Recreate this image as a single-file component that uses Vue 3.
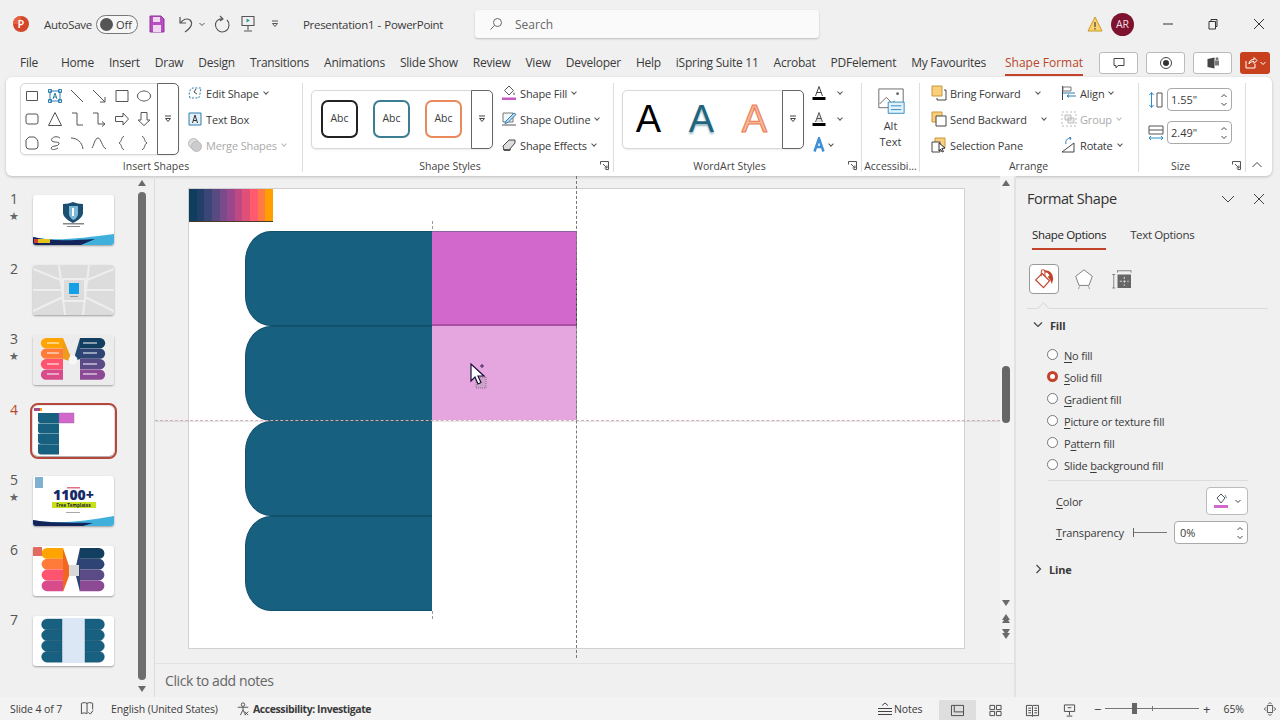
<script setup>
const tabs = [
  ['File', 24], ['Home', 0], ['Insert', 0], ['Draw', 0], ['Design', 0], ['Transitions', 0], ['Animations', 0],
  ['Slide Show', 0], ['Review', 0], ['View', 0], ['Developer', 0], ['Help', 0], ['iSpring Suite 11', 0],
  ['Acrobat', 0], ['PDFelement', 0], ['My Favourites', 0]
]
const shapes = [
  'M2.5 3.5h11v9h-11z',
  'M3 3h10v10H3zM6 11l2-6 2 6M6.8 9h2.4M1.5 1.5h3v3h-3zM11.5 1.5h3v3h-3zM1.5 11.5h3v3h-3zM11.5 11.5h3v3h-3z',
  'M2 2l12 12',
  'M2 2l12 12M14 9v5H9',
  'M2 2.5h12v11H2z',
  'M8 3c3.6 0 6.5 2.2 6.5 5s-2.9 5-6.5 5-6.5-2.2-6.5-5S4.400 3 8 3z',
  'M4 3h8a2 2 0 0 1 2 2v6a2 2 0 0 1-2 2H4a2 2 0 0 1-2-2V5a2 2 0 0 1 2-2z',
  'M8 1.500l6.500 13h-13z',
  'M3 2h5v12h6',
  'M2 2h5v11h6M11 10.500l3 2.500-3 2.500',
  'M1.500 5.500H9V2l5.500 6L9 14v-3.500H1.500z',
  'M5 1.500h6V9h3l-6 5.500L2 9h3z',
  'M2 5l3-3h5c3 1 4 4 4 6v3a3 3 0 0 1-3 3H5a3 3 0 0 1-3-3z',
  'M13 3C9 0 3 3 5 6c2 2 8 0 7 3s-7 1-8 4c0 2 4 2 7 0',
  'M2 3c6 0 11 4 12 11',
  'M1 13C3 10 4 3 7 3c3 0 4 9 8 11',
  'M10 1.500C7 1.500 8 7 5 8c3 1 2 6.500 5 6.500',
  'M6 1.500C9 1.500 8 7 11 8c-3 1-2 6.500-5 6.500'
]
const slides = [
  { n: 1, star: true }, { n: 2 }, { n: 3, star: true }, { n: 4, sel: true },
  { n: 5, star: true }, { n: 6 }, { n: 7 }
]
const stripes = ['#0f3d5e', '#223f6a', '#3a4676', '#5a4a82', '#7b4a8a', '#9b478d', '#bf4a83', '#e04f78', '#ff5a6e', '#ff7a45', '#ffa000']
const fills = [
  { label: 'o fill', key: 'N', pre: '' },
  { label: 'olid fill', key: 'S', pre: '', on: true },
  { label: 'radient fill', key: 'G', pre: '' },
  { label: 'icture or texture fill', key: 'P', pre: '' },
  { label: 'ttern fill', key: 'a', pre: 'P' },
  { label: 'ackground fill', key: 'b', pre: 'Slide ' }
]
const warm = ['#ffa400', '#ff7b3a', '#ff5470', '#d84c8c']
const cool = ['#123f5f', '#2e4474', '#5a4a86', '#8c4a94']
</script>

<template>
  <div class="app">
    <header class="titlebar">
      <svg class="logo" viewBox="0 0 18 18"><circle cx="9" cy="9" r="8" fill="#d2472a"/><path d="M1 9a8 8 0 0 1 8-8v8z" fill="#e8613c"/><text x="5.500" y="13" font-size="11" fill="#fff" font-family="Open Sans" font-weight="600">P</text></svg>
      <span class="autosave">AutoSave</span>
      <span class="toggle"><i></i><b>Off</b></span>
      <svg class="qa save" viewBox="0 0 16 18"><path d="M1 1h11l3 3v13H1z" fill="#b84fc0" stroke="#8f3296"/><path d="M4 2h7v5H4z" fill="#f0d8f2"/><path d="M4 10h8v7H4z" fill="#f0d8f2"/></svg>
      <svg class="qa undo" viewBox="0 0 16 18"><path d="M2 2v6h6M2.500 8C5 4 9 3 12 5c3 3 2 7-5 12" fill="none" stroke="#555" stroke-width="1.200"/></svg>
      <svg class="mini chev-undo" viewBox="0 0 8 8"><path d="M1.500 3L4 5.500 6.500 3" fill="none" stroke="#555"/></svg>
      <svg class="qa redo" viewBox="0 0 16 18"><path d="M6 1l3 3-3 2M9 4C4 3 1 7 1.500 10.500 2 14 5 17 8 17c4 0 7-3 7-7 0-2-1-4-2-5" fill="none" stroke="#555" stroke-width="1.100"/></svg>
      <svg class="qa present" viewBox="0 0 16 18"><path d="M2 1.500h12v9H2zM8 10.500V15M4 16h8" fill="none" stroke="#555" stroke-width="1.100"/><path d="M6.500 3.500l3.500 2-3.500 2z" fill="#2f9e8f"/></svg>
      <svg class="mini custom" viewBox="0 0 8 8"><path d="M1 1h6M1.500 3.500L4 6.500l2.500-3z" fill="none" stroke="#555"/></svg>
      <span class="doc">Presentation1&nbsp; - &nbsp;PowerPoint</span>
      <div class="search">
        <svg viewBox="0 0 14 14" class="ico14"><circle cx="8.500" cy="5.500" r="4" fill="none" stroke="#666"/><path d="M5.500 8.500L1.500 12.500" stroke="#666"/></svg>
        <span>Search</span>
      </div>
      <div class="title-right">
        <svg class="warn" viewBox="0 0 16 16"><path d="M8 1l7 14H1z" fill="#fbd36a" stroke="#c79a2a"/><path d="M8 6v5M8 12v1.500" stroke="#444" stroke-width="1.200"/></svg>
        <span class="avatar">AR</span>
        <svg class="win min" viewBox="0 0 12 12"><path d="M1 6h10" stroke="#333"/></svg>
        <svg class="win rest" viewBox="0 0 12 12"><path d="M2 3.500h6.500V11H2zM4 3.500V1.500h6v7H8.500" fill="none" stroke="#333"/></svg>
        <svg class="win close" viewBox="0 0 12 12"><path d="M1 1l10 10M11 1L1 11" stroke="#333"/></svg>
      </div>
    </header>

    <nav class="tabs">
      <span v-for="t in tabs" :key="t[0]" class="tab" :class="{ file: t[1] }">{{ t[0] }}</span>
      <span class="tab active">Shape Format</span>
      <div class="tab-actions">
        <span class="tbtn"><svg viewBox="0 0 14 14" class="ico14"><path d="M2 2.500h10v7H6L4 12V9.500H2z" fill="none" stroke="#444"/></svg></span>
        <span class="tbtn"><svg viewBox="0 0 14 14" class="ico14"><circle cx="7" cy="7" r="5.500" fill="none" stroke="#444"/><circle cx="7" cy="7" r="3" fill="#333"/></svg></span>
        <span class="tbtn"><svg viewBox="0 0 14 14" class="ico14"><path d="M1.500 3l7-1.500v11l-7-1.500z" fill="#444"/><path d="M9 4.500h4v5H9z" fill="#777"/><circle cx="11" cy="2.800" r="1.500" fill="#777"/></svg></span>
        <span class="share"><svg viewBox="0 0 14 14" class="ico14"><path d="M2 5v7h9V8M5 8c0-3 2-4.500 5-4.500V1.500l3 3-3 3V5.500C8 5.500 6 6 5 8z" fill="none" stroke="#fff"/></svg><svg class="mini" viewBox="0 0 8 8"><path d="M1.500 3L4 5.500 6.500 3" fill="none" stroke="#fff"/></svg></span>
      </div>
    </nav>

    <section class="ribbon">
      <div class="group g-insert">
        <div class="gcontent">
          <div class="gallery gal-shapes">
            <div class="shape-grid">
              <svg v-for="(d, i) in shapes" :key="i" class="ico" :class="{ accent: i === 1 }" viewBox="0 0 16 16"><path :d="d"/></svg>
            </div>
            <span class="gscroll"><svg class="mini" viewBox="0 0 8 8"><path d="M1 1h6M1.500 3.500L4 6.500l2.500-3z" fill="none" stroke="#444"/></svg></span>
          </div>
          <div class="cmds">
            <div class="cmd"><svg class="ico plain" viewBox="0 0 16 16"><path d="M3 13C1 9 3 3 6 3h8l-1 6c-1 2-1 4-1 4z" fill="none" stroke="#2b7cb0" stroke-dasharray="2 1.500"/><path d="M9 4l-2 3 3 2" fill="none" stroke="#444"/></svg>Edit Shape<i class="caret"></i></div>
            <div class="cmd"><svg class="ico plain" viewBox="0 0 16 16"><path d="M2 2h12v12H2z" fill="#e3f0f8" stroke="#2b7cb0"/><path d="M5.500 12L8 4l2.500 8M6.300 9.500h3.400" fill="none" stroke="#333"/></svg>Text Box</div>
            <div class="cmd off"><svg class="ico plain" viewBox="0 0 16 16"><circle cx="6.500" cy="6.500" r="5" fill="#ddd" stroke="#bbb"/><circle cx="9.500" cy="9.500" r="5" fill="#ccc" stroke="#bbb"/></svg>Merge Shapes<i class="caret"></i></div>
          </div>
        </div>
        <div class="glabel l-insert">Insert Shapes</div>
      </div>
      <span class="sep"></span>

      <div class="group g-styles">
        <div class="gcontent">
          <div class="gallery gal-styles">
            <div class="abcs">
              <span class="abc a1">Abc</span><span class="abc a2">Abc</span><span class="abc a3">Abc</span>
            </div>
            <span class="gscroll"><svg class="mini" viewBox="0 0 8 8"><path d="M1 1h6M1.500 3.500L4 6.500l2.500-3z" fill="none" stroke="#444"/></svg></span>
          </div>
          <div class="cmds">
            <div class="cmd"><svg class="ico plain" viewBox="0 0 16 16"><path d="M8 1l4.500 4.500L8 10 3.500 5.500z" fill="#fff" stroke="#555"/><path d="M13 7l1 2.500h-2z" fill="#555"/><path d="M1 12.500h14v2.500H1z" fill="#c75bc4"/></svg>Shape Fill<i class="caret"></i></div>
            <div class="cmd"><svg class="ico plain" viewBox="0 0 16 16"><path d="M2 2h10v9H2z" fill="#f3f8fb" stroke="#777"/><path d="M5 10l8-8 2 1.500-8 8-3 1z" fill="#bcd9ee" stroke="#2b7cb0"/><path d="M1 13h14v2H1z" fill="#aaa"/></svg>Shape Outline<i class="caret"></i></div>
            <div class="cmd"><svg class="ico plain" viewBox="0 0 16 16"><path d="M2 9l6-6h6v3l-6 7H3z" fill="#ddd" stroke="#444"/><path d="M2 12l1 2h6l1-2" fill="#555"/></svg>Shape Effects<i class="caret"></i></div>
          </div>
        </div>
        <div class="glabel shift">Shape Styles<svg class="launch" viewBox="0 0 9 9"><path d="M.5 3.500v-3h8v8h-3M3 3l4 4M7 4.500V7H4.500" fill="none" stroke="#555"/></svg></div>
      </div>
      <span class="sep"></span>

      <div class="group g-word">
        <div class="gcontent">
          <div class="gallery gal-styles">
            <div class="wa-row">
              <span class="wa w1">A</span><span class="wa w2">A</span><span class="wa w3">A</span>
            </div>
            <span class="gscroll"><svg class="mini" viewBox="0 0 8 8"><path d="M1 1h6M1.500 3.500L4 6.500l2.500-3z" fill="none" stroke="#444"/></svg></span>
          </div>
          <div class="cmds wa-cmds">
            <div class="cmd"><svg class="ico plain" viewBox="0 0 16 16"><path d="M4.500 11L8 1.500 11.500 11M5.700 7.500h4.600" fill="none" stroke="#444"/><path d="M1.500 12h13v3h-13z" fill="#000"/></svg><i class="caret wide"></i></div>
            <div class="cmd"><svg class="ico plain" viewBox="0 0 16 16"><path d="M4.500 11L8 1.500 11.500 11M5.700 7.500h4.600" fill="#ddd" stroke="#555"/><path d="M1.500 12h13v3h-13z" fill="#000"/></svg><i class="caret wide"></i></div>
            <div class="cmd"><svg class="ico plain" viewBox="0 0 16 16"><path d="M3.500 14.500L8 1.500l4.500 13M5.300 10h5.400" fill="none" stroke="#3f8fd6" stroke-width="2.500"/></svg><i class="caret"></i></div>
          </div>
        </div>
        <div class="glabel shift">WordArt Styles<svg class="launch" viewBox="0 0 9 9"><path d="M.5 3.500v-3h8v8h-3M3 3l4 4M7 4.500V7H4.500" fill="none" stroke="#555"/></svg></div>
      </div>
      <span class="sep"></span>

      <div class="group g-access">
        <div class="gcontent alt">
          <svg class="alt-ico" viewBox="0 0 28 32"><path d="M1 1h26v20H1z" fill="#fff" stroke="#666"/><path d="M2 17l7-7 6 6 3-2" fill="none" stroke="#666"/><circle cx="21" cy="6" r="1.500" fill="#666"/><path d="M11 15h17v12H11z" fill="#e3f1fa" stroke="#2b8cc4"/><path d="M14 19h11M14 23h11" stroke="#2b8cc4"/></svg>
          <span>Alt<br>Text</span>
        </div>
        <div class="glabel">Accessibi...</div>
      </div>
      <span class="sep"></span>

      <div class="group g-arrange">
        <div class="gcontent arr">
          <div class="cmds col1">
            <div class="cmd"><svg class="ico plain" viewBox="0 0 16 16"><path d="M1 1h10v10H1z" fill="#f9cf7d" stroke="#c8973a"/><path d="M13 5h2v10H6v-2" fill="none" stroke="#444"/></svg>Bring Forward<i class="caret far1"></i></div>
            <div class="cmd"><svg class="ico plain" viewBox="0 0 16 16"><path d="M1 1h10v10H1z" fill="#f9cf7d" stroke="#c8973a"/><path d="M5 5h10v10H5z" fill="#fff" stroke="#444"/></svg>Send Backward<i class="caret far2"></i></div>
            <div class="cmd"><svg class="ico plain" viewBox="0 0 16 16"><path d="M4 1h10v10H4z" fill="#f9cf7d" stroke="#c8973a"/><path d="M1 5h8v10H1z" fill="#fff" stroke="#444"/><path d="M8 6l6 5-3 .5 1.500 3-1.500.5-1.500-3L8 14z" fill="#fff" stroke="#333"/></svg>Selection Pane</div>
          </div>
          <div class="cmds">
            <div class="cmd"><svg class="ico plain" viewBox="0 0 16 16"><path d="M1.500 1v14" stroke="#444"/><path d="M2 2h8v4H2z" fill="#fff" stroke="#777"/><path d="M2 8h12" stroke="#2b7cb0"/><path d="M6 11h9M6 11l2-1.500M6 11l2 1.500" stroke="#2b7cb0" fill="none"/></svg>Align<i class="caret"></i></div>
            <div class="cmd off"><svg class="ico plain" viewBox="0 0 16 16"><path d="M1 1h14v14H1z" fill="none" stroke="#bbb" stroke-dasharray="2 2"/><path d="M4 4h6v5H4zM7 7h6v5H7z" fill="#eee" stroke="#bbb"/></svg>Group<i class="caret"></i></div>
            <div class="cmd"><svg class="ico plain" viewBox="0 0 16 16"><path d="M1 15L13 6v9z" fill="none" stroke="#444"/><path d="M5 7c-1-3 1-6 5-6M8 0l2 1-1 2" fill="none" stroke="#2b7cb0"/></svg>Rotate<i class="caret"></i></div>
          </div>
        </div>
        <div class="glabel l-arrange">Arrange</div>
      </div>
      <span class="sep"></span>

      <div class="group g-size">
        <div class="gcontent sizes">
          <div class="size-row">
            <svg class="ico plain" viewBox="0 0 16 18"><path d="M9 2h5v14H9z" fill="#fff" stroke="#555"/><path d="M3.500 2v14M1.500 4l2-2.500 2 2.500M1.500 14l2 2.500 2-2.500" fill="none" stroke="#2b8cc4"/></svg>
            <span class="spin">1.55"<em><svg class="mini" viewBox="0 0 8 8"><path d="M1.500 5L4 2.500 6.500 5" fill="none" stroke="#444"/></svg><svg class="mini" viewBox="0 0 8 8"><path d="M1.500 3L4 5.500 6.500 3" fill="none" stroke="#444"/></svg></em></span>
          </div>
          <div class="size-row">
            <svg class="ico plain" viewBox="0 0 16 18"><path d="M1 2h14v8H1zM1 6h14" fill="#fff" stroke="#555"/><path d="M1 14h14M3 12l-2 2 2 2M13 12l2 2-2 2" fill="none" stroke="#2b8cc4"/></svg>
            <span class="spin">2.49"<em><svg class="mini" viewBox="0 0 8 8"><path d="M1.500 5L4 2.500 6.500 5" fill="none" stroke="#444"/></svg><svg class="mini" viewBox="0 0 8 8"><path d="M1.500 3L4 5.500 6.500 3" fill="none" stroke="#444"/></svg></em></span>
          </div>
        </div>
        <div class="glabel shift2">Size<svg class="launch" viewBox="0 0 9 9"><path d="M.5 3.500v-3h8v8h-3M3 3l4 4M7 4.500V7H4.500" fill="none" stroke="#555"/></svg></div>
      </div>
      <span class="sep"></span>
      <div class="collapse"><svg viewBox="0 0 12 8" class="col-ico"><path d="M1.500 6L6 1.500 10.500 6" fill="none" stroke="#444"/></svg></div>
    </section>

    <main class="main">
      <aside class="thumbs">
        <div class="thumb-list">
          <div v-for="s in slides" :key="s.n" class="trow">
            <div class="tnum" :class="{ red: s.sel }"><span class="numtxt">{{ s.n }}</span><span v-if="s.star" class="star">★</span></div>
            <div class="thumb" :class="{ selected: s.sel }">
              <svg viewBox="0 0 81 50" class="tsvg">
                <template v-if="s.n === 1">
                  <path d="M30 9c4 0 7-1 10-2 3 1 6 2 10 2v9c0 5-8 9-10 10-2-1-10-5-10-10z" fill="#1a4f72"/><path d="M36 11h9v8c0 3-4 6-4.500 6S36 22 36 19z" fill="#7db8d6"/><path d="M39 13h2v8h-2z" fill="#fff"/>
                  <path d="M30 28h21v1.500H30zM34 31h13v1H34z" fill="#888"/>
                  <path d="M0 50V42c20 5 50 1 81-3v11z" fill="#3fb0dc"/><path d="M0 50V42c20 5 40 3 62 2l-14 6z" fill="#13245a"/>
                  <path d="M1 44h16v4H1z" fill="#e6c21c"/><path d="M1 44h4v4H1z" fill="#d3402c"/>
                </template>
                <template v-else-if="s.n === 2">
                  <path d="M0 0h81v50H0z" fill="#dcdcdc"/>
                  <path d="M0 4l30 12M81 4L52 16M0 46l30-14M81 46L52 32M26 0l6 50M56 0l-6 50M0 25h28M54 25h27M30 14h22v22H30z" stroke="#eeeeee" stroke-width="2" fill="none"/>
                  <path d="M36 18h10v11H36z" fill="#14a0e6"/><path d="M37 31h8v1h-8z" fill="#999"/>
                </template>
                <template v-else-if="s.n === 3">
                  <path d="M0 0h81v50H0z" fill="#ececec"/>
                  <path v-for="(c, i) in warm" :key="'w' + i" :d="`M13 ${3 + i * 10.500}h17v10.300H13a4.700 4.700 0 0 1 0-10.300z`" :fill="c"/>
                  <path v-for="(c, i) in cool" :key="'c' + i" :d="`M47 ${3 + i * 10.500}h20a4.700 4.700 0 0 1 0 10.300H47z`" :fill="c"/>
                  <path d="M30 3l7 17v6L30 24z" fill="#ef9b1b"/><path d="M47 3l-5 17v6l5-2z" fill="#234a70"/>
                  <circle cx="40" cy="25" r="4.500" fill="#f7f7f7"/>
                  <path d="M14 8h12M14 18h12M14 29h12M14 39h12M50 8h14M50 18h14M50 29h14M50 39h14" stroke="#fff" stroke-width="1"/>
                </template>
                <template v-else-if="s.n === 4">
                  <path d="M1 2h8v3H1z" fill="#a84a8a"/><path d="M7 2h2v3H7z" fill="#ffa000"/>
                  <path v-for="i in 4" :key="i" :d="`M5 ${7 + (i - 1) * 10.400}h21v10.200H8a3 3 0 0 1-3-3z`" fill="#17607f"/>
                  <path d="M26 7h15v10H26z" fill="#d268cc" stroke="#8f5f9f" stroke-width=".4"/>
                </template>
                <template v-else-if="s.n === 5">
                  <path d="M2 1h8v11H2z" fill="#7fb0d0"/>
                  <path d="M34 11h13v1.500H34z" fill="#e0708a"/>
                  <text x="40.500" y="24" text-anchor="middle" font-size="14" font-weight="800" fill="#152a66" font-family="Open Sans">1100+</text>
                  <path d="M19 26h44v6H19z" fill="#c6e11c"/>
                  <text x="40.500" y="30.500" text-anchor="middle" font-size="4.500" font-weight="700" fill="#223" font-family="Open Sans">Free Templates</text>
                  <path d="M33 36h14v1H33z" fill="#aaa"/>
                  <path d="M0 50V44c20 4 50 2 81-4v10z" fill="#3fb0dc"/><path d="M0 50V44c20 4 40 2 60 3l-10 3z" fill="#13245a"/>
                </template>
                <template v-else-if="s.n === 6">
                  <path d="M30 2l6 18v10l-6 16z" fill="#f2671f"/><path d="M47 2l-4 18v10l4 16z" fill="#2e4474"/>
                  <path v-for="(c, i) in warm" :key="'w' + i" :d="`M14 ${2 + i * 10.800}h16v10.800H14a5.400 5.400 0 0 1 0-10.800z`" :fill="c"/>
                  <path v-for="(c, i) in cool" :key="'c' + i" :d="`M47 ${2 + i * 10.800}h19a5.400 5.400 0 0 1 0 10.800H47z`" :fill="c"/>
                  <path d="M36 19h10v11H36z" fill="#d8d8d8"/><path d="M0 1h9v9H0z" fill="#e36a5e"/>
                </template>
                <template v-else>
                  <path d="M29 2h23v45H29z" fill="#dbe7f5"/>
                  <path v-for="i in 4" :key="i" :d="`M14 ${3 + (i - 1) * 10.800}h15v10.800H14a5.400 5.400 0 0 1 0-10.800z`" fill="#17607f" stroke="#114c68" stroke-width=".4"/>
                  <path v-for="i in 4" :key="'r' + i" :d="`M52 ${3 + (i - 1) * 10.800}h14a5.400 5.400 0 0 1 0 10.800H52z`" fill="#17607f" stroke="#114c68" stroke-width=".4"/>
                </template>
              </svg>
            </div>
          </div>
        </div>
        <div class="vscroll">
          <i class="tri up"></i>
          <span class="vthumb"></span>
          <i class="tri down"></i>
        </div>
      </aside>

      <div class="editor">
        <div class="canvas">
          <div class="slide-area">
            <div class="slide">
              <div class="ramp"><i v-for="c in stripes" :key="c" :style="{ background: c }"></i></div>
              <div class="diagram">
                <div class="teal-col"><span v-for="i in 4" :key="i" class="teal"></span></div>
                <div class="pink-col"><span class="pink p1"></span><span class="pink p2"></span></div>
              </div>
              <svg class="cursor" viewBox="0 0 18 28"><path d="M6 14h10v11H6z" fill="#c9a3c9" opacity=".85" stroke="#555" stroke-dasharray="1 1" stroke-width=".8"/><path d="M1 1v17l4-4 3 7 3-1.500-3-6.500h6z" fill="#fff" stroke="#1b0f3a" stroke-width="1.200"/><path d="M12 1v4M10 3h4" stroke="#402060"/></svg>
            </div>
          </div>
          <div class="vscroll2">
            <i class="tri up"></i>
            <span class="vthumb2"></span>
            <i class="tri down"></i>
            <i class="tri2 prev"></i>
            <i class="tri2 next"></i>
          </div>
          <span class="guide-h"></span>
          <span class="guide-v"></span>
          <span class="tick t1"></span>
          <span class="tick t2"></span>
        </div>
        <div class="notes">Click to add notes</div>
      </div>

      <aside class="pane">
        <div class="pane-head">
          <span>Format Shape</span>
          <svg class="pane-chev" viewBox="0 0 14 8"><path d="M1 1l6 6 6-6" fill="none" stroke="#444"/></svg>
          <svg class="pane-x" viewBox="0 0 12 12"><path d="M1 1l10 10M11 1L1 11" stroke="#444"/></svg>
        </div>
        <div class="pane-tabs">
          <span class="ptab on">Shape Options</span>
          <span class="ptab">Text Options</span>
        </div>
        <div class="pane-icons">
          <span class="picon on"><svg viewBox="0 0 24 24" class="i24"><path d="M10 6l8 8-6.500 7.500-8.500-8.500z" fill="#fff" stroke="#c2432a" stroke-width="1.300"/><path d="M9 9V4a2 2 0 0 1 4 0v5" fill="none" stroke="#c2432a" stroke-width="1.100"/><path d="M13 2.500c5 0 9 3 9 10l-1.500 5-1.500-4-3-4 2-1c-1-3-3-4-5-4z" fill="#c2432a"/></svg></span>
          <svg viewBox="0 0 24 24" class="i24 pent"><path d="M12 2l9 7-3.500 10h-11L3 9z" fill="#fff" stroke="#777"/><path d="M7 20l-1 3M17 20l1 3" stroke="#999"/></svg>
          <svg viewBox="0 0 24 24" class="i24 psize"><path d="M6 1h18M6 .500v3M24 .500v3M1 6v18M-1 6h4M-1 24h4" stroke="#666" fill="none"/><path d="M6 6h18v18H6z" fill="#666"/><path d="M15 9v12M9 15h12" stroke="#fff" stroke-dasharray="3 2"/></svg>
        </div>
        <div class="pane-div"><i></i></div>
        <div class="sec-head"><svg class="sec-chev" viewBox="0 0 10 8"><path d="M1 1.500l4 4 4-4" fill="none" stroke="#444" stroke-width="1.200"/></svg>Fill</div>
        <div class="radios">
          <label v-for="f in fills" :key="f.label" class="radio">
            <i :class="{ on: f.on }"></i>
            <span>{{ f.pre }}<u>{{ f.key }}</u>{{ f.label }}</span>
          </label>
        </div>
        <div class="inner-div"></div>
        <div class="prop color">
          <span><u>C</u>olor</span>
          <span class="colbtn">
            <svg viewBox="0 0 16 16" class="ico16"><path d="M8 1l4 4-4 5-4-5z" fill="#fff" stroke="#555"/><path d="M12 2l1.500 3" stroke="#4a90c0"/><path d="M1 12h14v3H1z" fill="#d268cc"/></svg>
            <svg class="mini" viewBox="0 0 8 8"><path d="M1.500 3L4 5.500 6.500 3" fill="none" stroke="#444"/></svg>
          </span>
        </div>
        <div class="prop trans">
          <span><u>T</u>ransparency</span>
          <span class="slider"></span>
          <span class="pct">0%<em><svg class="mini" viewBox="0 0 8 8"><path d="M1.500 5L4 2.500 6.500 5" fill="none" stroke="#444"/></svg><svg class="mini" viewBox="0 0 8 8"><path d="M1.500 3L4 5.500 6.500 3" fill="none" stroke="#444"/></svg></em></span>
        </div>
        <div class="sec-head line"><svg class="sec-chev" viewBox="0 0 8 10"><path d="M1.500 1l4 4-4 4" fill="none" stroke="#444" stroke-width="1.200"/></svg>Line</div>
      </aside>
    </main>

    <footer class="status">
      <span class="s-slide">Slide 4 of 7</span>
      <svg class="s-book" viewBox="0 0 16 16"><path d="M1.500 2.500c2-1 4-1 6 0v11c-2-1-4-1-6 0zM7.500 2.500c2-1 4-1 6 0V9M9 12l2 2 3-4" fill="none" stroke="#444"/></svg>
      <span class="s-lang">English (United States)</span>
      <svg class="s-acc" viewBox="0 0 16 16"><circle cx="8" cy="3" r="2" fill="none" stroke="#444"/><path d="M2 6h12M8 6v3M5 15l3-6 3 6M10 11l4 4M14 11l-4 4" fill="none" stroke="#444"/></svg>
      <b class="s-bold">Accessibility: Investigate</b>
      <div class="s-right">
        <span class="s-notes">
          <svg viewBox="0 0 16 14" class="ico-n"><path d="M5 3.500L8 1l3 2.500M1 6.500h14M1 9.500h14M1 12.500h14" fill="none" stroke="#444"/></svg>Notes
        </span>
        <span class="vbtn on"><svg viewBox="0 0 16 14" class="ico-v"><path d="M1.500 1.500h13v11h-13zM4.500 1.500v7h10" fill="none" stroke="#444"/></svg></span>
        <span class="vbtn"><svg viewBox="0 0 16 14" class="ico-v"><path d="M2 1.500h5v4.500H2zM9 1.500h5v4.500H9zM2 8h5v4.500H2zM9 8h5v4.500H9z" fill="none" stroke="#444"/></svg></span>
        <span class="vbtn"><svg viewBox="0 0 16 14" class="ico-v"><path d="M1.500 1.500h6l.5 1 .5-1h6v11h-6l-.5 1-.5-1h-6zM8 2.500v10M3.500 4.500h3M3.500 7h3M3.500 9.500h3M10 4.500h3M10 7h3M10 9.500h3" fill="none" stroke="#444"/></svg></span>
        <span class="vbtn"><svg viewBox="0 0 16 14" class="ico-v"><path d="M2.500 1h11v7h-11zM8 8v4M5 13h6M6 4h4" fill="none" stroke="#444"/></svg></span>
        <span class="zm minus">−</span>
        <span class="zslider"><i></i><em></em></span>
        <span class="zm plus">+</span>
        <span class="zpct">65%</span>
        <svg class="s-fit" viewBox="0 0 16 16"><path d="M5 4h6v8H5zM1.500 8l2-2M1.500 8l2 2M14.500 8l-2-2M14.500 8l-2 2M8 .5l-2 2M8 .5l2 2M8 15.500l-2-2M8 15.500l2-2" fill="none" stroke="#444"/></svg>
      </div>
    </footer>
  </div>
</template>

<style>
html, body { margin: 0; padding: 0; overflow: hidden; background: #f0f0f0; }
</style>

<style scoped>
.app {
  width: 1280px; height: 720px; background: #f0f0f0; color: #3a3a3a;
  font-family: "Open Sans", "Noto Sans", sans-serif; font-size: 12px;
  display: flex; flex-direction: column; overflow: hidden;
}
u { text-underline-offset: 2px; text-decoration-thickness: 1px; }

/* title bar */
.titlebar { height: 48px; flex: none; display: flex; align-items: center; padding-left: 12px; box-sizing: border-box; }
.logo { width: 18px; height: 18px; }
.autosave { margin-left: 14px; font-size: 11.5px; width: 46px; letter-spacing: -.3px; }
.toggle { margin-left: 6px; width: 42px; height: 19px; box-sizing: border-box; border: 1px solid #777; border-radius: 10px; display: flex; align-items: center; padding-left: 3px; background: #f6f6f6; }
.toggle i { width: 13px; height: 13px; border-radius: 50%; background: #555; }
.toggle b { font-weight: 400; font-size: 11px; margin-left: 3px; }
.qa { width: 16px; height: 18px; flex: none; }
.save { margin-left: 11px; }
.undo { margin-left: 13px; }
.mini { width: 8px; height: 8px; flex: none; display: block; }
.chev-undo { margin-left: 4px; }
.redo { margin-left: 8px; }
.present { margin-left: 10px; }
.custom { margin-left: 15px; }
.doc { margin-left: 24px; width: 172px; font-size: 11.5px; letter-spacing: -.3px; word-spacing: -1px; white-space: nowrap; }
.search { width: 344px; height: 28px; box-sizing: border-box; background: #fafafa; border-radius: 3px; box-shadow: 0 1px 2px rgba(0,0,0,.22); display: flex; align-items: center; gap: 12px; padding-left: 14px; color: #666; }
.ico14 { width: 14px; height: 14px; display: block; flex: none; }
.title-right { margin-left: auto; display: flex; align-items: center; height: 100%; padding-right: 15px; }
.warn { width: 16px; height: 16px; }
.avatar { margin-left: 8px; width: 23px; height: 23px; border-radius: 50%; background: #7e1330; color: #f4dfe2; font-size: 10.5px; display: flex; align-items: center; justify-content: center; }
.win { width: 12px; height: 12px; }
.min { margin-left: 28px; }
.rest { margin-left: 33px; }
.close { margin-left: 34px; }

/* tabs */
.tabs { height: 29px; flex: none; display: flex; align-items: center; padding-left: 20px; gap: 15px; position: relative; font-size: 12px; letter-spacing: -.25px; }
.tab { white-space: nowrap; line-height: 29px; }
.tab.file { margin-right: 8px; }
.tab.active { color: #b7472a; font-weight: 500; margin-left: 4px; position: relative; letter-spacing: 0; }
.tab.active::after { content: ""; position: absolute; left: 0; right: 0; bottom: 1px; height: 2px; background: #c2432a; }
.tab-actions { position: absolute; left: 1099px; top: 4px; display: flex; gap: 8px; }
.tbtn { width: 39px; height: 22px; box-sizing: border-box; background: #fff; border: 1px solid #bbb; border-radius: 3px; display: flex; align-items: center; justify-content: center; }
.share { width: 30px; height: 22px; margin-left: 0; background: #c8411f; border-radius: 3px; display: flex; align-items: center; justify-content: center; gap: 1px; }

/* ribbon */
.ribbon { height: 99px; flex: none; box-sizing: border-box; margin: 0 8px 0 6px; background: #fff; border-radius: 6px; box-shadow: 0 1px 3px rgba(0,0,0,.22); display: flex; }
.group { display: flex; flex-direction: column; flex: none; position: relative; box-sizing: border-box; }
.gcontent { height: 81px; display: flex; align-items: center; box-sizing: border-box; padding-top: 3px; }
.glabel { height: 18px; line-height: 16px; font-size: 10.5px; text-align: center; color: #444; }
.glabel.l-insert { padding-right: 10px; }
.glabel.l-arrange { padding-right: 12px; }
.glabel.shift { padding-right: 24px; }
.glabel.shift2 { padding-right: 32px; }
.launch { position: absolute; right: 4px; bottom: 6px; width: 9px; height: 9px; }
.sep { width: 1px; flex: none; margin: 6px 0 4px; background: #dedede; }
.g-insert { width: 296px; padding-left: 14px; }
.g-styles { width: 310px; padding-left: 8px; }
.g-word { width: 247px; padding-left: 8px; }
.g-access { width: 57px; }
.g-arrange { width: 218px; padding-left: 11px; }
.g-size { width: 106px; padding-left: 9px; }
.gallery { display: flex; background: #fff; border: 1px solid #d8d8d8; border-radius: 5px; box-sizing: border-box; flex: none; box-shadow: 0 1px 2px rgba(0,0,0,.08); }
.gal-shapes { width: 159px; height: 72px; }
.gal-styles { width: 182px; height: 59px; }
.shape-grid { flex: 1; display: grid; grid-template-columns: repeat(6, 22.400px); grid-auto-rows: 23.500px; align-content: center; align-items: center; justify-items: center; }
.ico { width: 16px; height: 16px; fill: none; stroke: #555; stroke-width: 1; display: block; flex: none; }
.ico.accent { stroke: #2b7cb0; }
.ico.plain { stroke: none; }
.gscroll { width: 22px; flex: none; margin: -1px -1px -1px 0; border: 1px solid #666; border-radius: 0 5px 5px 0; box-sizing: border-box; display: flex; align-items: center; justify-content: center; background: #fff; }
.cmds { display: flex; flex-direction: column; margin-left: 8px; flex: none; }
.cmd { height: 26px; display: flex; align-items: center; gap: 3px; font-size: 11px; white-space: nowrap; position: relative; letter-spacing: -.15px; }
.cmd.off { color: #aaa; }
.caret { display: inline-block; width: 3px; height: 3px; margin: -2px 0 0 2px; border: solid #555; border-width: 0 1px 1px 0; transform: rotate(45deg); flex: none; }
.cmd.off .caret { border-color: #bbb; }
.caret.wide { margin-left: 11px; }
.caret.far1 { position: absolute; left: 105px; top: 10px; margin: 0; }
.caret.far2 { position: absolute; left: 111px; top: 10px; margin: 0; }
.abcs { flex: 1; display: flex; padding-left: 9px; gap: 15px; align-items: center; }
.abc { width: 37px; height: 38px; box-sizing: border-box; border-radius: 7px; display: flex; align-items: center; justify-content: center; font-size: 10.5px; padding-bottom: 3px; }
.a1 { border: 2px solid #222; }
.a2 { border: 2px solid #3c7d92; }
.a3 { border: 2px solid #e98a5c; }
.wa-row { flex: 1; display: flex; align-items: center; font-family: "Liberation Sans", sans-serif; font-size: 38px; line-height: 1; padding-left: 12px; gap: 26px; }
.wa { width: 27px; text-align: center; }
.w1 { color: #000; }
.w2 { color: #1f6580; text-shadow: 0 2px 2px #9ab6c5; }
.w3 { color: #f7b79c; -webkit-text-stroke: 1px #ea7a4c; }
.wa-cmds { margin-left: 7px; }
.wa-cmds .cmd { gap: 0; }
.alt { flex-direction: column; align-items: center; justify-content: flex-start; padding-top: 11px; font-size: 11px; line-height: 16px; text-align: center; }
.alt-ico { width: 28px; height: 30px; }
.alt span { margin-top: 0; }
.arr { align-items: center; }
.arr .cmds { margin-left: 0; }
.col1 { width: 130px; }
.sizes { flex-direction: column; gap: 10px; align-items: flex-start; justify-content: center; padding-bottom: 6px; }
.size-row { display: flex; align-items: center; gap: 3px; }
.size-row .ico { height: 18px; width: 16px; }
.spin, .pct { display: flex; align-items: center; justify-content: space-between; box-sizing: border-box; background: #fff; border: 1px solid #aaa; border-radius: 4px; font-size: 11px; padding-left: 3px; }
.spin { width: 65px; height: 23px; }
.spin em, .pct em { display: flex; flex-direction: column; padding-right: 3px; }
.collapse { flex: 1; display: flex; justify-content: flex-end; align-items: flex-end; padding: 0 9px 7px 0; }
.col-ico { width: 12px; height: 8px; }

/* main */
.main { flex: 1; min-height: 0; display: flex; }
.thumbs { width: 155px; flex: none; box-sizing: border-box; border-right: 1px solid #dcdcdc; display: flex; }
.thumb-list { width: 135px; flex: none; padding-top: 19px; }
.trow { height: 70.200px; display: flex; align-items: flex-start; }
.tnum { width: 33px; flex: none; box-sizing: border-box; padding-right: 5px; text-align: center; color: #555; display: flex; flex-direction: column; align-items: center; gap: 5px; margin-top: -3px; }
.numtxt { font-size: 14px; line-height: 14px; }
.tnum.red { color: #b7472a; }
.star { font-size: 11px; line-height: 10px; color: #666; }
.thumb { width: 81px; height: 50px; box-sizing: border-box; background: #fff; border-radius: 3px; box-shadow: 0 1px 2px rgba(0,0,0,.35); overflow: visible; }
.thumb.selected { outline: 2px solid #b5483a; outline-offset: 1px; border-radius: 5px; }
.tsvg { width: 81px; height: 50px; display: block; border-radius: 3px; }
.vscroll { width: 14px; flex: none; display: flex; flex-direction: column; align-items: center; padding-top: 4px; box-sizing: border-box; height: 516px; }
.tri { display: block; width: 0; height: 0; border-left: 4.500px solid transparent; border-right: 4.500px solid transparent; flex: none; }
.tri.up { border-bottom: 6px solid #6a6a6a; }
.tri.down { border-top: 6px solid #6a6a6a; }
.vthumb { width: 8px; flex: 1; background: #6e6e6e; border-radius: 4px; margin: 6px 0 6px; }
.editor { width: 859px; flex: none; display: flex; flex-direction: column; }
.canvas { height: 488px; flex: none; display: flex; position: relative; border-bottom: 1px solid #e2e2e2; box-sizing: border-box; }
.slide-area { flex: 1; padding: 13px 0 0 34px; }
.slide { width: 775px; height: 459px; background: #fff; box-shadow: 0 0 0 1px #d0d0d0; position: relative; }
.ramp { position: absolute; left: 0; top: 0; width: 84px; height: 33px; display: flex; border-bottom: 1px solid #4a3a2a; box-sizing: border-box; }
.ramp i { flex: 1; }
.diagram { position: absolute; left: 56px; top: 42px; display: flex; }
.teal-col { display: flex; flex-direction: column; width: 187px; }
.teal { height: 95px; box-sizing: border-box; background: #17607f; border: 1px solid #12506e; border-right: 0; border-radius: 26px 0 0 26px / 30px 0 0 30px; }
.pink-col { width: 145px; display: flex; flex-direction: column; }
.pink { display: block; box-sizing: border-box; height: 95px; }
.p1 { background: #d268cc; border-top: 1px solid #8f5f9f; border-bottom: 2px solid #a652a0; border-right: 1px dashed #333; }
.p2 { background: #e5a5df; height: 94px; border-right: 1px solid #aaa; }
.cursor { position: absolute; left: 281px; top: 174px; width: 18px; height: 28px; }
.vscroll2 { width: 14px; flex: none; display: flex; flex-direction: column; align-items: center; padding: 4px 2px 0 0; position: relative; box-sizing: border-box; background: #f3f3f3; }
.vthumb2 { width: 8px; height: 57px; background: #666; border-radius: 4px; margin: 180px 0 177px; flex: none; }
.tri2 { display: block; width: 0; height: 0; flex: none; border-left: 4.500px solid transparent; border-right: 4.500px solid transparent; margin-top: 8px; position: relative; }
.tri2.prev { border-bottom: 6px solid #6a6a6a; }
.tri2.prev::before { content: ""; position: absolute; left: -4.500px; top: 3px; border-left: 4.500px solid transparent; border-right: 4.500px solid transparent; border-bottom: 6px solid #6a6a6a; }
.tri2.next { border-top: 6px solid #6a6a6a; margin-top: 13px; }
.tri2.next::before { content: ""; position: absolute; left: -4.500px; top: -10px; border-left: 4.500px solid transparent; border-right: 4.500px solid transparent; border-top: 6px solid #6a6a6a; }
.guide-h { position: absolute; left: 0; top: 244px; width: 845px; border-top: 1px dashed #d3b0b6; box-shadow: 0 1px 0 rgba(120,120,120,.18); }
.guide-v { position: absolute; left: 421px; top: 0; height: 482px; border-left: 1px dashed #777; }
.tick { position: absolute; left: 277px; height: 8px; border-left: 1px dashed #999; }
.t1 { top: 45px; }
.t2 { top: 435px; }
.notes { flex: 1; display: flex; align-items: center; padding-left: 10px; font-size: 14px; color: #666; letter-spacing: -.4px; }

/* pane */
.pane { flex: 1; box-sizing: border-box; border-left: 2px solid #e2e2e2; padding-left: 11px; margin-left: 0; display: flex; flex-direction: column; }
.pane-head { height: 22px; margin-top: 11px; display: flex; align-items: center; font-size: 14.500px; color: #333; position: relative; letter-spacing: -.4px; }
.pane-chev { position: absolute; left: 194px; top: 8px; width: 14px; height: 8px; }
.pane-x { position: absolute; left: 226px; top: 6px; width: 12px; height: 12px; }
.pane-tabs { display: flex; gap: 24px; margin: 15px 0 0 5px; font-size: 11.500px; letter-spacing: -.35px; }
.ptab { height: 26px; line-height: 22px; white-space: nowrap; }
.ptab.on { border-bottom: 2px solid #c2432a; box-sizing: border-box; color: #222; font-weight: 500; }
.pane-icons { display: flex; align-items: center; margin: 13px 0 0 2px; height: 31px; }
.picon { width: 30px; height: 30px; box-sizing: border-box; background: #fff; border: 1px solid #999; border-radius: 4px; display: flex; align-items: center; justify-content: center; }
.i24 { width: 22px; height: 22px; display: block; overflow: visible; }
.pent { margin-left: 14px; }
.psize { margin-left: 18px; width: 18px; height: 18px; }
.pane-div { width: 241px; height: 1px; background: #dadada; margin-top: 14px; position: relative; }
.pane-div i { position: absolute; left: 12px; top: -4px; width: 8px; height: 8px; background: #f0f0f0; border: solid #dadada; border-width: 1px 0 0 1px; transform: rotate(45deg); }
.sec-head { display: flex; align-items: center; font-weight: 700; font-size: 11px; margin-top: 8px; height: 16px; letter-spacing: -.2px; }
.sec-chev { width: 10px; height: 8px; margin: 0 7px 0 6px; flex: none; }
.radios { margin-top: 12px; padding-left: 20px; display: flex; flex-direction: column; }
.radio { height: 21.900px; display: flex; align-items: center; gap: 6px; font-size: 11px; letter-spacing: -.2px; }
.radio i { width: 11px; height: 11px; box-sizing: border-box; border-radius: 50%; border: 1px solid #777; background: #fff; flex: none; margin-top: -2px; }
.radio i.on { border: 3px solid #c2432a; }
.inner-div { width: 200px; height: 1px; background: #dcdcdc; margin: 4px 0 0 21px; }
.prop { display: flex; align-items: center; font-size: 11px; padding-left: 29px; position: relative; letter-spacing: -.15px; }
.color { height: 29px; margin-top: 6px; }
.colbtn { position: absolute; left: 179px; top: 0; width: 42px; height: 28px; box-sizing: border-box; background: #fff; border: 1px solid #bbb; border-radius: 4px; display: flex; align-items: center; justify-content: center; gap: 5px; }
.ico16 { width: 16px; height: 16px; display: block; }
.trans { height: 23px; margin-top: 5px; }
.slider { position: absolute; left: 106px; top: 11px; width: 34px; height: 1px; background: #777; }
.slider::before { content: ""; position: absolute; left: 0; top: -4px; width: 1px; height: 9px; background: #666; }
.pct { position: absolute; left: 147px; top: 0; width: 74px; height: 23px; padding-left: 5px; }
.line { margin-top: 17px; }
.line .sec-chev { width: 8px; height: 10px; margin: 0 6px 0 8px; }

/* status */
.status { height: 23px; flex: none; background: #f3f3f3; display: flex; align-items: center; font-size: 10.500px; position: relative; letter-spacing: -.1px; }
.s-slide { margin-left: 10px; width: 70px; }
.s-book { width: 15px; height: 15px; }
.s-lang { margin-left: 16px; width: 125px; white-space: nowrap; }
.s-acc { width: 14px; height: 14px; }
.s-bold { margin-left: 3px; font-weight: 700; white-space: nowrap; letter-spacing: -.42px; }
.s-right { position: absolute; left: 877px; top: 0; height: 23px; display: flex; align-items: center; }
.s-notes { display: flex; align-items: center; width: 62px; font-size: 10.500px; gap: 1px; }
.ico-n { width: 16px; height: 14px; }
.vbtn { width: 37.400px; height: 20px; margin-top: 3px; display: flex; align-items: center; justify-content: center; }
.vbtn.on { background: #dedede; }
.ico-v { width: 15px; height: 13px; display: block; }
.zm { width: 12px; text-align: center; font-size: 13px; color: #444; }
.minus { margin-left: 3px; }
.zslider { width: 94px; height: 1px; background: #777; position: relative; margin: 0 2px 0 1px; }
.zslider i { position: absolute; left: 27px; top: -5px; width: 5px; height: 11px; background: #666; }
.zslider em { position: absolute; left: 47px; top: -2px; width: 1px; height: 5px; background: #777; }
.zpct { margin-left: 11px; font-size: 10.500px; width: 26px; }
.s-fit { width: 14px; height: 14px; margin-left: 13px; }
</style>
